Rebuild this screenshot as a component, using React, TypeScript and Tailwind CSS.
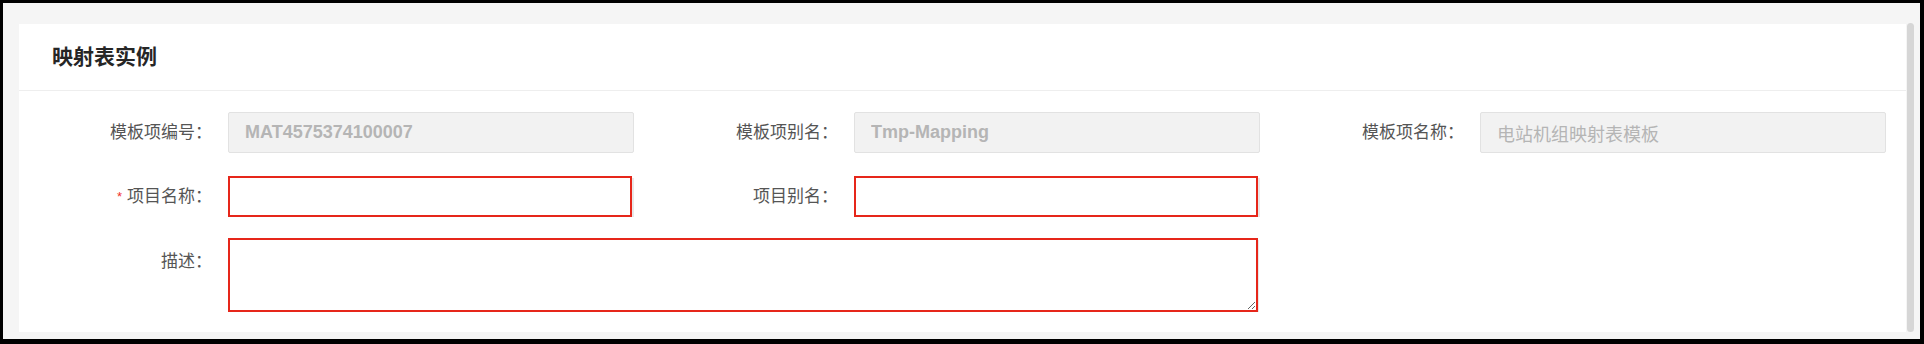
const font = "font-['Liberation_Sans','Noto_Sans_CJK_SC',sans-serif]";

type FieldProps = {
  label: string;
  required?: boolean;
  children: React.ReactNode;
};

function Field({ label, required, children }: FieldProps) {
  return (
    <div className="flex w-[626px] items-center">
      <label className="flex w-[193px] items-center justify-end whitespace-nowrap text-[17px] text-[#555555]">
        {required && <span className="mr-[5px] text-[13px] text-[#f0302a]">*</span>}
        {label}：
      </label>
      <div className="ml-4">{children}</div>
    </div>
  );
}

function ReadOnlyInput({ value, bold }: { value: string; bold?: boolean }) {
  return (
    <input
      readOnly
      value={value}
      className={`h-[41px] w-[406px] rounded-[2px] border border-[#e2e2e2] bg-[#f2f2f2] px-4 text-[18px] text-[#b5b5b5] outline-none ${
        bold ? "font-bold" : ""
      }`}
    />
  );
}

function EditInput() {
  return (
    <input className="h-[41px] w-[404px] border-2 border-[#e6261a] bg-white px-4 text-[17px] text-[#333] shadow-[3px_1px_0_-1px_#e8e8e8] outline-none" />
  );
}

export default function App() {
  return (
    <div
      className={`flex h-[344px] w-[1924px] border-[3px] border-r-[4px] border-b-[5px] border-black bg-[#f5f5f5] pt-[21px] pr-[6px] pb-[7px] pl-4 ${font}`}
    >
      <div className="flex flex-1 flex-col bg-white">
        <div className="flex h-[67px] items-center border-b border-[#eeeeee] pl-[33px]">
          <h2 className="text-[21px] font-bold text-[#262626]">映射表实例</h2>
        </div>
        <div className="flex flex-col gap-[23px] pt-[21px]">
          <div className="flex">
            <Field label="模板项编号">
              <ReadOnlyInput value="MAT4575374100007" bold />
            </Field>
            <Field label="模板项别名">
              <ReadOnlyInput value="Tmp-Mapping" bold />
            </Field>
            <Field label="模板项名称">
              <ReadOnlyInput value="电站机组映射表模板" />
            </Field>
          </div>
          <div className="flex">
            <Field label="项目名称" required>
              <EditInput />
            </Field>
            <Field label="项目别名">
              <EditInput />
            </Field>
          </div>
        </div>
        <div className="mt-[21px] flex items-start">
          <label className="flex h-[47px] w-[193px] items-center justify-end text-[17px] text-[#555555]">
            描述：
          </label>
          <textarea className="ml-4 h-[74px] w-[1030px] border-2 border-[#e6261a] bg-white px-3 py-2 text-[17px] text-[#333] shadow-[2px_1px_0_-1px_#e8e8e8] outline-none" />
        </div>
      </div>
      <div className="ml-px mt-[-1px] w-[7px] rounded-full bg-[#d6d6d6]" />
    </div>
  );
}
